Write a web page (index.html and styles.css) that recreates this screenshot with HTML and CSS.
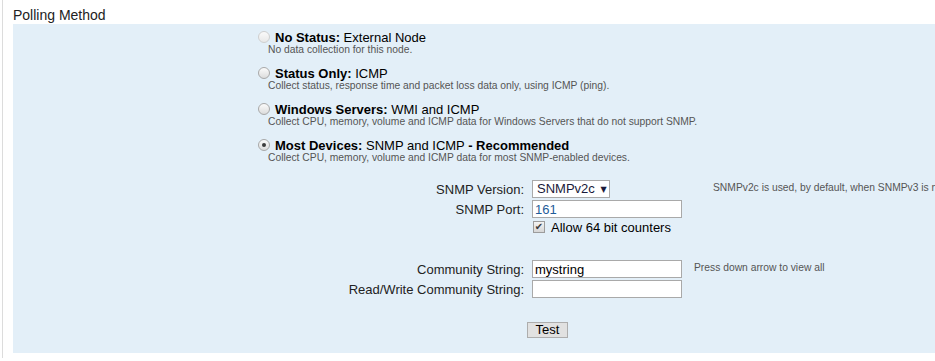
FILE: index.html
```html
<!DOCTYPE html>
<html lang="en">
<head>
    <meta charset="UTF-8">
    <title>Polling Method</title>
    <link rel="stylesheet" href="styles.css">
</head>
<body>
    <div class="page">
        <div class="section-title">Polling Method</div>

        <div class="panel">
            <div class="options">
                <div class="option">
                    <div class="option-head">
                        <span class="radio disabled"></span>
                        <span class="option-title"><b>No Status:</b> External Node</span>
                    </div>
                    <div class="option-desc">No data collection for this node.</div>
                </div>

                <div class="option">
                    <div class="option-head">
                        <span class="radio"></span>
                        <span class="option-title"><b>Status Only:</b> ICMP</span>
                    </div>
                    <div class="option-desc">Collect status, response time and packet loss data only, using ICMP (ping).</div>
                </div>

                <div class="option">
                    <div class="option-head">
                        <span class="radio"></span>
                        <span class="option-title"><b>Windows Servers:</b> WMI and ICMP</span>
                    </div>
                    <div class="option-desc">Collect CPU, memory, volume and ICMP data for Windows Servers that do not support SNMP.</div>
                </div>

                <div class="option">
                    <div class="option-head">
                        <span class="radio checked"></span>
                        <span class="option-title"><b>Most Devices:</b> SNMP and ICMP <b>- Recommended</b></span>
                    </div>
                    <div class="option-desc">Collect CPU, memory, volume and ICMP data for most SNMP-enabled devices.</div>
                </div>
            </div>

            <div class="form">
                <div class="row">
                    <div class="label">SNMP Version:</div>
                    <div class="field">
                        <span class="select">SNMPv2c <span class="arrow">&#9660;</span></span>
                    </div>
                    <div class="help help-version">SNMPv2c is used, by default, when SNMPv3 is not supported.</div>
                </div>
                <div class="row">
                    <div class="label">SNMP Port:</div>
                    <div class="field">
                        <input class="text port" type="text" value="161">
                    </div>
                </div>
                <div class="row row-check">
                    <div class="label"></div>
                    <div class="field">
                        <label class="check"><span class="box">&#10004;</span>Allow 64 bit counters</label>
                    </div>
                </div>

                <div class="row row-community">
                    <div class="label">Community String:</div>
                    <div class="field">
                        <input class="text" type="text" value="mystring">
                    </div>
                    <div class="help help-community">Press down arrow to view all</div>
                </div>
                <div class="row">
                    <div class="label">Read/Write Community String:</div>
                    <div class="field">
                        <input class="text" type="text" value="">
                    </div>
                </div>

                <div class="actions">
                    <button class="btn" type="button">Test</button>
                </div>
            </div>
        </div>
    </div>
</body>
</html>
```

FILE: styles.css
```css
* {
    margin: 0;
    padding: 0;
    box-sizing: border-box;
}

body {
    font-family: Arial, 'Liberation Sans', sans-serif;
    background: #ffffff;
    color: #222;
    overflow: hidden;
}

.page {
    margin-left: 2px;
    border-left: 1px solid #dcdcdc;
    padding-left: 10px;
    height: 358px;
}

.section-title {
    font-size: 14px;
    line-height: 17px;
    padding-top: 7px;
    color: #222;
}

.panel {
    background: #e3eff8;
    height: 329px;
    padding-top: 6px;
    overflow: hidden;
}

/* polling options */
.options {
    margin-left: 245px;
    display: flex;
    flex-direction: column;
    gap: 10px;
}

.option-head {
    display: flex;
    align-items: center;
    height: 14px;
}

.radio {
    width: 12px;
    height: 12px;
    border-radius: 50%;
    border: 1px solid #a8a8a8;
    background: linear-gradient(180deg, #fbfbfb 0%, #dcdcdc 100%);
    margin-right: 5px;
    position: relative;
    flex-shrink: 0;
}

.radio.disabled {
    border-color: #cfcfcf;
    background: linear-gradient(180deg, #fafafa 0%, #e8e8e8 100%);
}

.radio.checked::after {
    content: '';
    position: absolute;
    top: 3px;
    left: 3px;
    width: 4px;
    height: 4px;
    border-radius: 50%;
    background: #3c3c3c;
}

.option-title {
    font-size: 13px;
    color: #000;
    white-space: nowrap;
}

.option-desc {
    font-size: 10.3px;
    line-height: 12px;
    color: #555;
    padding-left: 10px;
    white-space: nowrap;
}

/* snmp fields */
.form {
    margin-top: 15px;
    font-size: 13px;
}

.row {
    display: flex;
    align-items: center;
    height: 20px;
}

.row-check {
    height: 16px;
}

.row-community {
    margin-top: 24px;
}

.label {
    flex: 0 0 511px;
    margin-right: 8px;
    text-align: right;
    color: #222;
    white-space: nowrap;
}

.field {
    flex: 0 0 150px;
    display: flex;
    align-items: center;
}

.select {
    height: 18px;
    width: 78px;
    border: 1px solid #a9a9a9;
    background: #fff;
    padding-left: 4px;
    line-height: 16px;
    color: #1a1a3a;
    white-space: nowrap;
}

.arrow {
    font-size: 8px;
    vertical-align: 1px;
    margin-left: 2px;
    font-family: 'DejaVu Sans', sans-serif;
}

.text {
    width: 150px;
    height: 18px;
    border: 1px solid #a9a9a9;
    background: #fff;
    padding: 0 2px;
    font-family: Arial, 'Liberation Sans', sans-serif;
    font-size: 13px;
    color: #000;
    outline: none;
}

.text.port {
    color: #1f5c99;
}

.check {
    display: flex;
    align-items: center;
    color: #000;
    padding-left: 1px;
}

.box {
    width: 12px;
    height: 12px;
    border: 1px solid #9c9c9c;
    background: linear-gradient(180deg, #f4f4f4 0%, #d6d6d6 100%);
    font-size: 10px;
    line-height: 10px;
    text-align: center;
    color: #3a3a3a;
    margin-right: 6px;
    font-family: 'DejaVu Sans', sans-serif;
}

.help {
    flex-shrink: 0;
    font-size: 10.3px;
    color: #555;
    white-space: nowrap;
    align-self: flex-start;
    padding-top: 3px;
}

.help-version {
    margin-left: 31px;
}

.help-community {
    margin-left: 12px;
}

.actions {
    margin-top: 23px;
    padding-left: 514px;
}

.btn {
    width: 41px;
    height: 16px;
    border: 1px solid #adadad;
    background: #e1e1e1;
    font-family: Arial, 'Liberation Sans', sans-serif;
    font-size: 13px;
    line-height: 14px;
    color: #000;
}
```
